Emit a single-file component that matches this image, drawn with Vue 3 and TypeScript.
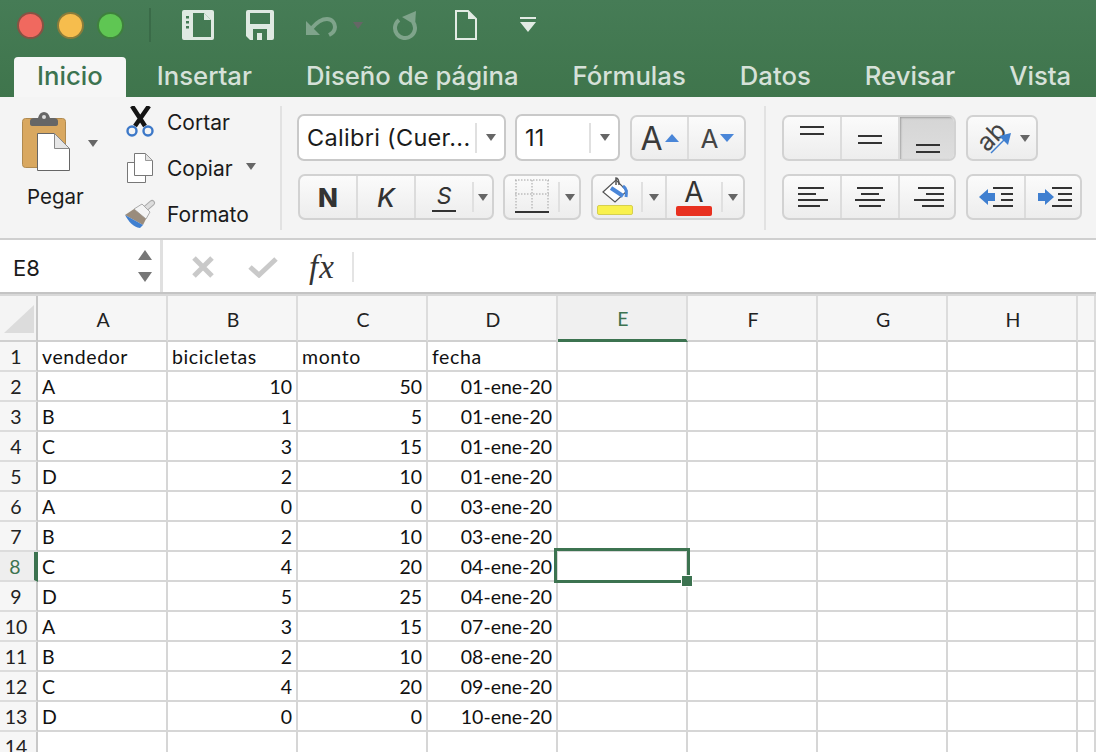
<script setup lang="ts">
const cols: string[] = ['A', 'B', 'C', 'D', 'E', 'F', 'G', 'H', '']
type Row = [string, string, string, string]
const rows: Row[] = [
  ['vendedor', 'bicicletas', 'monto', 'fecha'],
  ['A', '10', '50', '01-ene-20'],
  ['B', '1', '5', '01-ene-20'],
  ['C', '3', '15', '01-ene-20'],
  ['D', '2', '10', '01-ene-20'],
  ['A', '0', '0', '03-ene-20'],
  ['B', '2', '10', '03-ene-20'],
  ['C', '4', '20', '04-ene-20'],
  ['D', '5', '25', '04-ene-20'],
  ['A', '3', '15', '07-ene-20'],
  ['B', '2', '10', '08-ene-20'],
  ['C', '4', '20', '09-ene-20'],
  ['D', '0', '0', '10-ene-20'],
  ['', '', '', ''],
]
const tabs: string[] = ['Insertar', 'Diseño de página', 'Fórmulas', 'Datos', 'Revisar', 'Vista']
</script>

<template>
  <div class="app">
    <header class="title">
      <div class="qat">
        <span class="light red"></span>
        <span class="light yellow"></span>
        <span class="light green"></span>
        <span class="qat-sep"></span>
        <svg width="32" height="30" viewBox="0 0 32 30">
          <path fill="#dfe9e2" fill-rule="evenodd" d="M2 0h28a2 2 0 0 1 2 2v26a2 2 0 0 1-2 2H2a2 2 0 0 1-2-2V2a2 2 0 0 1 2-2zM11 3v24h18V10l-7-7z" />
          <path fill="#dfe9e2" d="M22 3l7 7h-7z" />
          <path fill="#447a55" d="M4 6h3v2.500H4zM4 11h3v2.500H4zM4 16h3v2.500H4z" />
        </svg>
        <svg class="q-save" width="28" height="30" viewBox="0 0 28 30">
          <path fill="#dfe9e2" fill-rule="evenodd" d="M2 0h24a2 2 0 0 1 2 2v26a2 2 0 0 1-2 2H4l-4-4V2a2 2 0 0 1 2-2zM4 3v11h20V3zM7 19v11h4v-7h5v7h5V19z" />
        </svg>
        <svg class="q-undo" width="32" height="22" viewBox="0 0 32 22">
          <path fill="#7fa48b" d="M1 5v14h14z" />
          <path fill="none" stroke="#7fa48b" stroke-width="4" d="M7 12C12 6 17 3 22 3c5 0 8 4 8 8 0 3-2 6-6 8" />
        </svg>
        <span class="caret q-ucaret"></span>
        <svg class="q-redo" width="26" height="29" viewBox="0 0 26 29">
          <path fill="none" stroke="#7fa48b" stroke-width="4" d="M7 9A10 10 0 1 0 21 11" />
          <path fill="#7fa48b" d="M10 6L24 0l-1 14z" />
        </svg>
        <svg class="q-new" width="22" height="30" viewBox="0 0 22 30">
          <path fill="none" stroke="#e2ebe4" stroke-width="2" d="M1 1h12l8 8v20H1z" />
          <path fill="#e2ebe4" d="M13 1l8 8h-8z" />
        </svg>
        <svg class="q-more" width="16" height="16" viewBox="0 0 16 16">
          <path fill="#e2ebe4" d="M0 0h16v2H0zM0 5h16l-8 10z" />
        </svg>
      </div>
      <nav class="tabs">
        <span class="tab active">Inicio</span>
        <span v-for="t in tabs" :key="t" class="tab">{{ t }}</span>
      </nav>
    </header>

    <section class="ribbon">
      <div class="sec clip">
        <div class="paste">
          <svg width="48" height="60" viewBox="0 0 48 60">
            <rect x="0.500" y="6.500" width="43" height="49" rx="3" fill="#d9a860" stroke="#b08a50" />
            <path fill="#666" d="M8 9c0-2 2-3 4-3h4c1-4 3-6 6-6s5 2 6 6h4c2 0 4 1 4 3v3c0 1-1 2-2 2H10c-1 0-2-1-2-2z" />
            <circle cx="22" cy="5" r="2" fill="#ddd" />
            <path fill="#fff" stroke="#666" d="M15.500 21.500h17l15 15v22h-32z" />
            <path fill="#e6e6e6" stroke="#888" d="M32.500 21.500v15h15z" />
          </svg>
          <span class="caret paste-caret"></span>
          <span class="paste-label">Pegar</span>
        </div>
        <div class="clip-list">
          <div class="clip-row">
            <svg class="clip-icon" width="32" height="32" viewBox="0 0 32 32">
              <path fill="none" stroke="#141414" stroke-width="4.500" d="M8 0l13 20M25 0L11 20" />
              <circle cx="8" cy="25" r="4.500" fill="none" stroke="#3c78c8" stroke-width="2.400" />
              <circle cx="24" cy="25" r="4.500" fill="none" stroke="#3c78c8" stroke-width="2.400" />
            </svg>
            <span>Cortar</span>
          </div>
          <div class="clip-row">
            <svg class="clip-icon" width="32" height="30" viewBox="0 0 32 30">
              <path fill="#fff" stroke="#777" d="M3.500 9.500h18v20h-18z" />
              <path fill="#fff" stroke="#777" d="M10.500 .5h11l7 7v15h-18z" />
              <path fill="#e4e4e4" stroke="#999" d="M21.500 .5v7h7z" />
            </svg>
            <span>Copiar</span>
            <span class="caret copy-caret"></span>
          </div>
          <div class="clip-row">
            <svg class="clip-icon" width="32" height="30" viewBox="0 0 32 30">
              <path fill="none" stroke="#aaa" stroke-width="6" stroke-linecap="round" d="M28 4l-7 6" />
              <path fill="none" stroke="#ddd" stroke-width="4" stroke-linecap="round" d="M28 4l-7 6" />
              <path fill="#f4f4f4" stroke="#aaa" d="M10 10l8-5 8 8-4 7z" />
              <path fill="#9a8c7c" d="M10 10l12 10-3 6L1 16z" />
              <path fill="#3f7fd0" d="M1 16l18 10-3 3C9 28 5 23 1 16z" />
            </svg>
            <span>Formato</span>
          </div>
        </div>
      </div>

      <div class="sec font">
        <div class="row">
          <div class="combo w-font">
            <span class="combo-text">Calibri (Cuer...</span>
            <span class="vr"></span>
            <span class="caret-box"><span class="caret"></span></span>
          </div>
          <div class="combo w-size">
            <span class="combo-text">11</span>
            <span class="vr"></span>
            <span class="caret-box"><span class="caret"></span></span>
          </div>
          <div class="grp w-grow">
            <div class="seg grow-seg">
              <span class="big-a">A</span>
              <svg width="14" height="8" viewBox="0 0 14 8"><path fill="#4a86d8" d="M7 0l7 8H0z" /></svg>
            </div>
            <div class="seg grow-seg">
              <span class="small-a">A</span>
              <svg width="14" height="8" viewBox="0 0 14 8"><path fill="#4a86d8" d="M0 0h14l-7 8z" /></svg>
            </div>
          </div>
        </div>
        <div class="row second">
          <div class="grp w-bis">
            <div class="seg s58"><span class="b">N</span></div>
            <div class="seg s58"><span class="i">K</span></div>
            <div class="seg s56 plain"><span class="u">S</span></div>
            <span class="vr"></span>
            <span class="caret-box"><span class="caret"></span></span>
          </div>
          <div class="grp w-border">
            <div class="seg border-seg plain">
              <svg width="34" height="36" viewBox="0 0 34 36">
                <path fill="none" stroke="#a0a0a0" stroke-width="1" stroke-dasharray="1.500 1.500" d="M0 1h34M17 1v30M0 15h34M1 1v30M33 1v30" />
                <path stroke="#333" stroke-width="2" d="M0 33h34" />
              </svg>
            </div>
            <span class="vr"></span>
            <span class="caret-box"><span class="caret"></span></span>
          </div>
          <div class="grp w-color">
            <div class="seg color-seg plain">
              <svg width="36" height="40" viewBox="0 0 36 40">
                <path fill="#fff" stroke="#555" stroke-width="1.200" d="M6 15L19 3l11 11-12 11z" />
                <path fill="none" stroke="#4a86d8" stroke-width="4" d="M14 11l12 8" />
                <path fill="none" stroke="#555" stroke-width="1.500" d="M19 8V1c2 0 3 3 3 7" />
                <path fill="none" stroke="#4a86d8" stroke-width="3" d="M26 9c3 2 4 6 3 11" />
                <rect x="0.500" y="28.500" width="35" height="9" rx="1.500" fill="#f9f14c" stroke="#d5cf50" />
              </svg>
            </div>
            <span class="vr"></span>
            <span class="caret-box line-right"><span class="caret"></span></span>
            <div class="seg color-seg2 plain">
              <div class="color-a"><span>A</span><i></i></div>
            </div>
            <span class="vr"></span>
            <span class="caret-box"><span class="caret"></span></span>
          </div>
        </div>
      </div>

      <div class="sec align">
        <div class="row">
          <div class="grp w-v">
            <div class="seg s58 bars top"><i></i><i></i></div>
            <div class="seg s58 bars mid"><i></i><i></i></div>
            <div class="seg s58 plain bars bot on"><i></i><i></i></div>
          </div>
          <div class="grp w-orient">
            <div class="seg plain orient">
              <span class="ab">ab</span>
              <svg class="ab-arrow" width="22" height="22" viewBox="0 0 22 22">
                <path stroke="#3f7fd0" stroke-width="1.500" fill="none" d="M1 21L17 5" />
                <path fill="#3f7fd0" d="M21 1l-3 12-9-9z" />
              </svg>
            </div>
            <span class="caret orient-caret"></span>
          </div>
        </div>
        <div class="row second">
          <div class="grp w-v">
            <div class="seg s58 lines left"><i></i><i></i><i></i><i></i></div>
            <div class="seg s58 lines center"><i></i><i></i><i></i><i></i></div>
            <div class="seg s58 plain lines right"><i></i><i></i><i></i><i></i></div>
          </div>
          <div class="grp w-indent">
            <div class="seg s58">
              <svg width="34" height="20" viewBox="0 0 34 20">
                <path fill="#3f7fd0" d="M0 10L9 2v4h7v8H9v4z" />
                <path fill="#333" d="M14 0h20v2H14zM22 6h12v2H22zM22 12h12v2H22zM14 18h20v2H14z" />
              </svg>
            </div>
            <div class="seg s58 plain">
              <svg width="34" height="20" viewBox="0 0 34 20">
                <path fill="#3f7fd0" d="M0 6h7V2l9 8-9 8v-4H0z" />
                <path fill="#333" d="M14 0h20v2H14zM20 6h14v2H20zM20 12h14v2H20zM14 18h20v2H14z" />
              </svg>
            </div>
          </div>
        </div>
      </div>
    </section>

    <section class="fbar">
      <div class="name">
        <span class="name-text">E8</span>
        <svg width="14" height="32" viewBox="0 0 14 32">
          <path fill="#777" d="M7 0l7 10H0zM0 22h14l-7 10z" />
        </svg>
      </div>
      <div class="f-actions">
        <svg width="22" height="22" viewBox="0 0 22 22"><path stroke="#c9c9c9" stroke-width="5" d="M2 2l18 18M20 2L2 20" /></svg>
        <svg class="chk" width="30" height="22" viewBox="0 0 30 22"><path fill="none" stroke="#c9c9c9" stroke-width="5" d="M2 11l9 8L28 3" /></svg>
        <span class="fx">fx</span>
        <span class="f-vr"></span>
      </div>
    </section>

    <section class="sheet">
      <div class="corner"><svg width="32" height="30" viewBox="0 0 32 30"><path fill="#dcdcdc" d="M32 0v28H2z" /></svg></div>
      <div v-for="c in cols" :key="'h' + c" class="col-h" :class="{ 'col-on': c === 'E' }">{{ c }}</div>
      <template v-for="(r, i) in rows" :key="i">
        <div class="row-h" :class="{ 'row-on': i === 7 }">{{ i + 1 }}</div>
        <div v-for="(c, j) in cols" :key="j" class="cell" :class="{ num: j === 1 || j === 2 || j === 3, 'sel-cell': i === 7 && j === 4 }">
          <template v-if="j < 4 && i !== 0">{{ r[j] }}</template>
          <span v-else-if="j < 4" class="head-text">{{ r[j] }}</span>
          <template v-if="i === 7 && j === 4">
            <span class="sel"></span>
            <span class="handle"></span>
          </template>
        </div>
      </template>
    </section>
  </div>
</template>

<style>
html, body { margin: 0; background: #fff; overflow: hidden; }
</style>

<style scoped>
.app { width: 1096px; height: 752px; overflow: hidden; font-family: Inter, "Liberation Sans", sans-serif; color: #1b1b1b; }

.title { height: 97px; background: linear-gradient(#467c56, #3f754c); display: flex; flex-direction: column; }
.qat { height: 50px; display: flex; align-items: center; padding-left: 17px; box-sizing: border-box; }
.light { width: 23px; height: 23px; border-radius: 50%; border: 2px solid rgba(30, 60, 40, .5); margin-right: 13px; flex: none; }
.red { background: #f0695f; }
.yellow { background: #f6bd4d; }
.green { background: #5fc653; }
.qat-sep { width: 2px; height: 34px; background: #3a6b48; margin-left: 12px; margin-right: 31px; }
.q-save { margin-left: 32px; }
.q-undo { margin-left: 31px; margin-top: 3px; }
.q-ucaret { margin-left: 16px; border-top-color: #7fa48b; }
.q-redo { margin-left: 29px; }
.q-new { margin-left: 37px; }
.q-more { margin-left: 43px; }
.tabs { flex: 1; display: flex; align-items: flex-end; padding-left: 14px; }
.tab { height: 40px; line-height: 37px; font-size: 25.700px; font-weight: 500; color: #d6e1d9; padding: 0 27px; box-sizing: border-box; white-space: nowrap; }
.tab.active { background: #f6f6f6; color: #3c7350; border-radius: 4px 4px 0 0; padding: 0 23px; width: 112px; margin-right: 4px; }

.ribbon { height: 143px; background: #f4f4f4; display: flex; box-sizing: border-box; padding-top: 9px; border-bottom: 2px solid #cfcfcf; }
.sec { height: 124px; box-sizing: border-box; border-right: 2px solid #e2e2e2; }
.clip { width: 282px; display: flex; padding-left: 22px; }
.paste { width: 102px; position: relative; flex: none; display: flex; flex-direction: column; padding-top: 6px; box-sizing: border-box; }
.paste-caret { position: absolute; left: 66px; top: 34px; }
.paste-label { font-size: 20.500px; margin-top: 12px; margin-left: 5px; }
.clip-list { display: flex; flex-direction: column; margin-top: -7px; }
.clip-row { height: 46px; flex: none; display: flex; align-items: center; font-size: 21px; width: 150px; }
.clip-icon { flex: none; margin-right: 11px; }
.copy-caret { margin-left: 13px; margin-top: -3px; }

.caret { display: inline-block; width: 0; height: 0; border-left: 5px solid transparent; border-right: 5px solid transparent; border-top: 7px solid #666; flex: none; }
.caret-box { flex: 1; display: flex; align-items: center; justify-content: center; }

.font { width: 484px; padding: 8px 0 0 15px; }
.align { flex: 1; padding: 8px 0 0 16px; border-right: 0; }
.row { display: flex; gap: 10px; height: 47px; }
.row.second { margin-top: 13px; }
.combo { height: 47px; box-sizing: border-box; background: #fff; border: 2px solid #c9c9c9; border-radius: 7px; display: flex; align-items: center; }
.w-font { width: 209px; margin-right: -1px; }
.w-size { width: 105px; }
.combo-text { flex: 1; font-size: 23.500px; letter-spacing: .3px; padding-left: 8px; white-space: nowrap; }
.vr { width: 2px; height: 30px; background: #e0e0e0; flex: none; align-self: center; }
.combo .caret-box { flex: none; width: 27px; }

.grp { height: 46px; box-sizing: border-box; border: 2px solid #d2d2d2; border-radius: 7px; background: linear-gradient(#fbfbfb, #ededed); display: flex; align-items: stretch; overflow: hidden; margin-top: 1px; }
.row.second .grp { margin-top: 0; }
.seg { display: flex; align-items: center; justify-content: center; border-right: 2px solid #dcdcdc; box-sizing: border-box; flex: none; }
.seg.plain { border-right: 0; }
.w-grow { width: 116px; }
.grow-seg { width: 57px; gap: 2px; }
.grow-seg + .grow-seg { border-right: 0; }
.big-a { font-size: 32px; font-weight: 400; color: #3a3a3a; }
.small-a { font-size: 26px; color: #444; }
.w-bis { width: 196px; margin-left: 1px; margin-right: -1px; }
.s58 { width: 58px; }
.s56 { width: 56px; }
.b { font-size: 26px; font-weight: 800; color: #333; }
.i { font-size: 26px; font-style: italic; font-weight: 500; color: #333; }
.u { font-size: 23px; font-style: italic; border-bottom: 2px solid #333; line-height: 28px; padding: 0 5px; color: #333; }
.w-border { width: 78px; }
.border-seg { width: 53px; }
.w-color { width: 154px; }
.color-seg { width: 48px; justify-content: flex-start; padding-left: 4px; }
.line-right { flex: none; width: 22px; border-right: 2px solid #dcdcdc; box-sizing: content-box; }
.color-seg2 { width: 54px; justify-content: flex-start; padding-left: 9px; }
.color-a { display: flex; flex-direction: column; align-items: center; width: 36px; }
.color-a span { font-size: 28px; line-height: 28px; color: #333; font-weight: 400; }
.color-a i { display: block; width: 36px; height: 10px; background: #e8301f; border-radius: 2px; }

.w-v { width: 174px; }
.bars { flex-direction: column; gap: 5px; }
.bars i { display: block; width: 24px; height: 2px; background: #333; }
.bars.top { padding-bottom: 16px; }
.bars.mid { padding-top: 2px; }
.bars.bot { padding-top: 20px; }
.on { background: linear-gradient(#d5d5d5, #dedede); box-shadow: inset 1px 1px 2px rgba(0,0,0,.25); width: 56px; }
.w-orient { width: 72px; align-items: center; }
.orient { width: 46px; height: 42px; position: relative; }
.ab { position: absolute; left: 7px; top: 6px; width: 32px; text-align: center; font-size: 25px; transform: rotate(-45deg); color: #444; line-height: 26px; }
.ab-arrow { position: absolute; left: 22px; top: 15px; }
.orient-caret { margin-left: 6px; }
.w-indent { width: 116px; }
.lines { flex-direction: column; gap: 4px; }
.lines i { display: block; height: 2px; background: #333; }
.lines i:nth-child(1) { width: 26px; }
.lines i:nth-child(2) { width: 18px; }
.lines i:nth-child(3) { width: 30px; }
.lines i:nth-child(4) { width: 22px; }
.lines.left { align-items: flex-start; padding-left: 14px; }
.lines.right { align-items: flex-end; padding-right: 14px; }

.fbar { height: 54px; display: flex; background: #fff; box-sizing: border-box; border-bottom: 2px solid #c4c4c4; }
.name { width: 163px; flex: none; box-sizing: border-box; border-right: 3px solid #e0e0e0; display: flex; align-items: center; justify-content: space-between; padding: 0 8px 0 13px; font-size: 22px; }
.name-text { padding-top: 4px; }
.f-actions { flex: 1; display: flex; align-items: center; padding-left: 29px; padding-top: 2px; }
.chk { margin-left: 34px; }
.fx { font-family: "Liberation Serif", serif; font-style: italic; font-size: 33px; margin-left: 31px; color: #333; line-height: 30px; width: 30px; letter-spacing: 1px; }
.f-vr { width: 2px; height: 30px; background: #e4e4e4; margin-left: 13px; }

.sheet { display: grid; grid-template-columns: 38px repeat(8, 130px) 18px; grid-template-rows: 46px repeat(14, 30px); border-top: 2px solid #d8d8d8; font-family: Lato, "Liberation Sans", sans-serif; font-size: 19.500px; }
.corner { background: #f4f4f4; border-right: 2px solid #c8c8c8; border-bottom: 2px solid #d0d0d0; box-sizing: border-box; padding: 9px 0 0 2px; }
.corner svg { display: block; }
.col-h { background: #f6f6f6; border-right: 2px solid #dcdcdc; border-bottom: 2px solid #d0d0d0; box-sizing: border-box; display: flex; align-items: center; justify-content: center; color: #222; padding: 2px 0 0 2px; }
.col-on { background: #f0f0f0; color: #3c7350; border-bottom: 3px solid #3c7350; }
.row-h { background: #f6f6f6; border-right: 2px solid #c8c8c8; border-bottom: 2px solid #dcdcdc; box-sizing: border-box; display: flex; align-items: center; justify-content: center; padding: 1px 4px 0 0; color: #222; }
.row-on { color: #3c7350; border-right: 4px solid #3c7350; background: #eeeeee; }
.cell { position: relative; border-right: 2px solid #d6d6d6; border-bottom: 2px solid #d6d6d6; box-sizing: border-box; padding: 0 4px; line-height: 30px; white-space: nowrap; color: #111; }
.sel-cell { z-index: 1; }
.num { text-align: right; }
.head-text { display: block; text-align: left; letter-spacing: .6px; }
.sel { position: absolute; left: -4px; top: -4px; right: -4px; bottom: -3px; border: 3px solid #3c7350; }
.handle { position: absolute; right: -7px; bottom: -7px; width: 10px; height: 10px; background: #3c7350; border: 1px solid #fff; }
</style>
